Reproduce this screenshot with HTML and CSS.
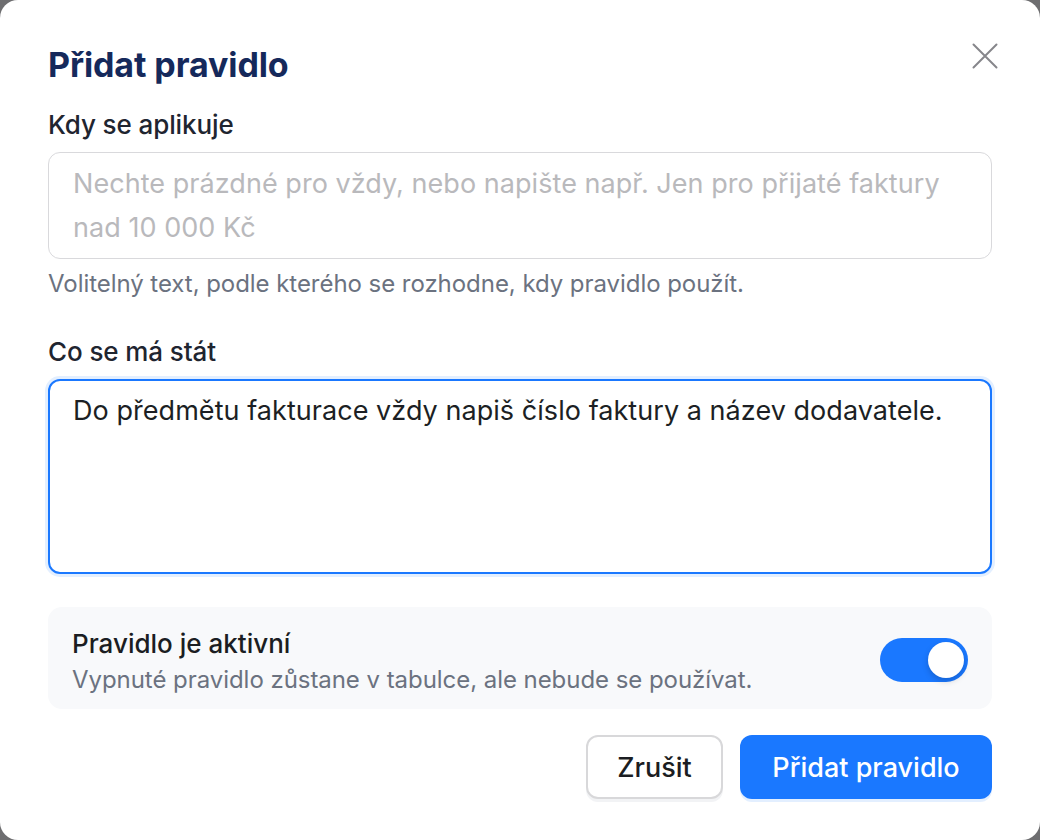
FILE: index.html
```html
<!DOCTYPE html>
<html lang="cs">
<head>
<meta charset="utf-8">
<title>Přidat pravidlo</title>
<link rel="stylesheet" href="styles.css">
</head>
<body>
<div class="modal">
  <div class="header">
    <h1 class="title">Přidat pravidlo</h1>
    <button class="close" aria-label="Zavřít">
      <svg width="26" height="26" viewBox="0 0 26 26" fill="none" stroke="#86868b" stroke-width="2" stroke-linecap="round"><path d="M1.5 1.5L24.5 24.5M24.5 1.5L1.5 24.5"/></svg>
    </button>
  </div>

  <label class="label" for="when">Kdy se aplikuje</label>
  <textarea id="when" class="field field-when" placeholder="Nechte prázdné pro vždy, nebo napište např. Jen pro přijaté faktury nad 10 000 Kč"></textarea>
  <p class="help">Volitelný text, podle kterého se rozhodne, kdy pravidlo použít.</p>

  <label class="label label-what" for="what">Co se má stát</label>
  <textarea id="what" class="field field-what">Do předmětu fakturace vždy napiš číslo faktury a název dodavatele.</textarea>

  <div class="card">
    <div class="card-text">
      <div class="card-title">Pravidlo je aktivní</div>
      <div class="card-sub">Vypnuté pravidlo zůstane v tabulce, ale nebude se používat.</div>
    </div>
    <div class="toggle"><div class="knob"></div></div>
  </div>

  <div class="actions">
    <button class="btn btn-secondary">Zrušit</button>
    <button class="btn btn-primary">Přidat pravidlo</button>
  </div>
</div>
</body>
</html>
```

FILE: styles.css
```css
* { box-sizing: border-box; }
html, body { margin: 0; padding: 0; }
body {
  background: #6e6e70;
  font-family: Inter, "Noto Sans", "Liberation Sans", sans-serif;
  width: 1040px;
  height: 840px;
  overflow: hidden;
}
.modal {
  width: 1040px;
  height: 840px;
  background: #ffffff;
  border-radius: 18px;
  padding: 44px 48px 40px;
  display: flex;
  flex-direction: column;
}
.header {
  display: flex;
  justify-content: space-between;
  align-items: center;
  height: 42px;
}
.title {
  margin: 0;
  font-size: 34px;
  line-height: 42px;
  font-weight: 700;
  color: #15295b;
  letter-spacing: -0.1px;
}
.close {
  border: 0;
  background: none;
  padding: 0;
  margin-right: -6px;
  margin-top: -18px;
  width: 26px;
  height: 26px;
  display: flex;
}
.label {
  margin-top: 24px;
  font-size: 26px;
  line-height: 30px;
  color: #1f2530;
  font-weight: 500;
  letter-spacing: -0.1px;
}
.label-what { margin-top: 40px; }
.field {
  display: block;
  width: 100%;
  margin-top: 12px;
  font-family: inherit;
  font-size: 27px;
  line-height: 44px;
  color: #1c1f24;
  resize: none;
  outline: none;
  border-radius: 12px;
  padding: 9px 24px;
  overflow: hidden;
  letter-spacing: 0.05px;
}
.field::placeholder { color: #b9b9bc; }
.field-when {
  height: 107px;
  border: 1px solid #d9d9dc;
}
.field-what {
  height: 195px;
  border: 2px solid #1a78ff;
  padding: 8px 23px;
  box-shadow: 0 0 0 3px #e3efff;
}
.help {
  margin: 12px 0 0;
  font-size: 24px;
  line-height: 26px;
  color: #6b7280;
  letter-spacing: -0.05px;
}
.card {
  margin-top: 33px;
  background: #f8f9fb;
  border-radius: 14px;
  padding: 22px 24px 16px;
  display: flex;
  align-items: center;
  justify-content: space-between;
}
.card-title {
  font-size: 26px;
  line-height: 30px;
  color: #1b1d22;
  font-weight: 500;
}
.card-sub {
  margin-top: 8px;
  font-size: 24px;
  line-height: 26px;
  color: #6b7280;
  letter-spacing: -0.05px;
}
.toggle {
  width: 88px;
  height: 44px;
  border-radius: 22px;
  background: #1a78ff;
  padding: 4px;
  display: flex;
  justify-content: flex-end;
  margin-top: -2px;
}
.knob {
  width: 36px;
  height: 36px;
  border-radius: 50%;
  background: #ffffff;
  box-shadow: 0 3px 6px rgba(0, 0, 0, 0.18);
}
.actions {
  margin-top: 26px;
  display: flex;
  justify-content: flex-end;
  gap: 17px;
}
.btn {
  height: 64px;
  border-radius: 12px;
  font-family: inherit;
  font-size: 27px;
  font-weight: 500;
  padding: 0;
}
.btn-secondary {
  width: 137px;
  background: #ffffff;
  color: #1b1d22;
  border: 2px solid #d8d8da;
  box-shadow: 0 3px 0 #f2f3f5;
}
.btn-primary {
  width: 252px;
  background: #1a78ff;
  color: #ffffff;
  border: 0;
  box-shadow: 0 3px 0 #e3efff;
}
```
